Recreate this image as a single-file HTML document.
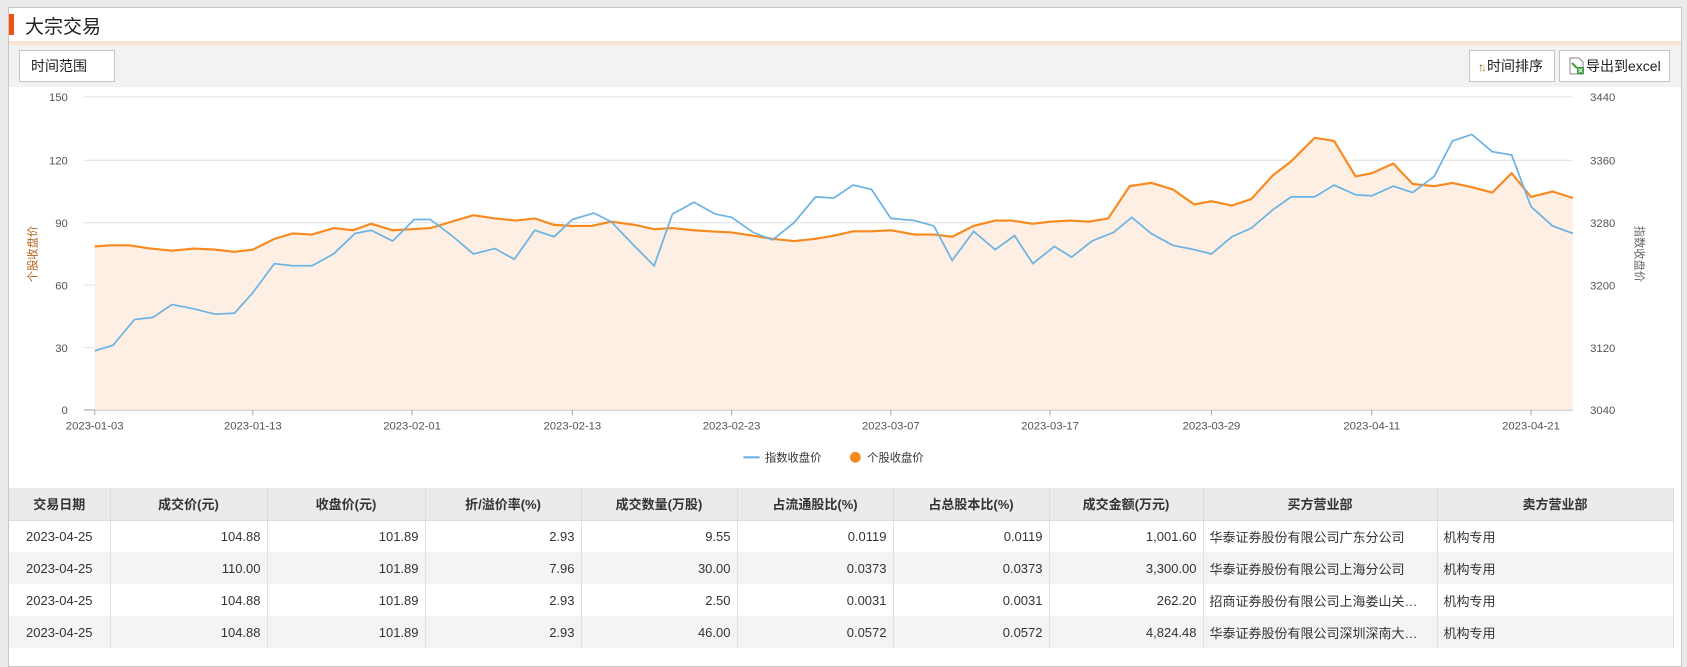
<!DOCTYPE html>
<html><head><meta charset="utf-8"><style>
*{margin:0;padding:0;box-sizing:border-box}
body{width:1687px;height:646px;overflow:hidden;background:#ebebeb;font-family:"Liberation Sans","Noto Sans CJK SC",sans-serif;color:#333;position:relative}
.panel{position:absolute;left:8px;top:7px;width:1674px;height:660px;background:#fff;border:1px solid #c8c8c8}
.obar{position:absolute;left:9px;top:14px;width:5px;height:21px;background:#f04e0e}
.title{position:absolute;left:25px;top:12px;font-size:19px;color:#222}
.peach{position:absolute;left:9px;top:41px;width:1672px;height:4px;background:#fde3d2}
.tool{position:absolute;left:9px;top:45px;width:1672px;height:42px;background:#f2f2f2}
.btn{position:absolute;top:50px;height:32px;border:1px solid #c4c4c4;background:#fff;font-size:14px;line-height:30px;color:#222}
table{position:absolute;left:9px;top:488px;border-collapse:collapse;font-size:13px;table-layout:fixed}
th{background:#ebebeb;height:32px;font-weight:bold;color:#333;border-right:1px solid #dcdcdc;border-bottom:1px solid #dcdcdc}
td{height:32px;border-right:1px solid #e0e0e0;padding:0 6px;white-space:nowrap;overflow:hidden}
tr.a td{background:#f4f4f4}
.r{text-align:right}.c{text-align:center}
</style></head><body>
<div class="panel"></div>
<div class="obar"></div>
<div class="title">大宗交易</div>
<div class="peach"></div>
<div class="tool"></div>
<div class="btn" style="left:19px;width:96px;padding-left:11px">时间范围</div>
<div class="btn" style="left:1469px;width:86px;padding-left:8px"><span style="font-size:12px;color:#555">↑</span><span style="font-size:12px;color:#f08000;margin-left:-3px">↓</span>时间排序</div>
<div class="btn" style="left:1559px;width:111px;padding-left:8px"><svg width="18" height="18" viewBox="0 0 18 18" style="vertical-align:-4px"><path d="M2 1h9l4 4v12H2z" fill="#fff" stroke="#888"/><path d="M4 6l5 5" stroke="#3a9a3a" stroke-width="2"/><rect x="9" y="10" width="7" height="7" fill="#3a9a3a"/><path d="M10.5 11.5l4 4M14.5 11.5l-4 4" stroke="#fff"/></svg>导出到excel</div>

<svg style="position:absolute;left:0;top:0" width="1687" height="646" viewBox="0 0 1568 600.4" preserveAspectRatio="none" font-family="Liberation Sans,sans-serif" font-size="10.5" fill="#555">
<g stroke="#e3e3e3" stroke-width="1">
<line x1="78" y1="90" x2="1462" y2="90"/><line x1="78" y1="149" x2="1462" y2="149"/><line x1="78" y1="207" x2="1462" y2="207"/><line x1="78" y1="265" x2="1462" y2="265"/><line x1="78" y1="323" x2="1462" y2="323"/>
</g>
<line x1="78" y1="381" x2="1462" y2="381" stroke="#aaa"/>
<g text-anchor="end"><text x="63" y="94">150</text><text x="63" y="153">120</text><text x="63" y="211">90</text><text x="63" y="269">60</text><text x="63" y="327">30</text><text x="63" y="385">0</text></g>
<g><text x="1478" y="94">3440</text><text x="1478" y="153">3360</text><text x="1478" y="211">3280</text><text x="1478" y="269">3200</text><text x="1478" y="327">3120</text><text x="1478" y="385">3040</text></g>
<text transform="translate(34,236) rotate(-90)" text-anchor="middle" fill="#b5651d" font-family="Liberation Sans,Noto Sans CJK SC,sans-serif">个股收盘价</text>
<text transform="translate(1520,236) rotate(90)" text-anchor="middle" fill="#666" font-family="Liberation Sans,Noto Sans CJK SC,sans-serif">指数收盘价</text>
<g text-anchor="middle"><text x="88" y="399">2023-01-03</text><text x="235" y="399">2023-01-13</text><text x="383" y="399">2023-02-01</text><text x="532" y="399">2023-02-13</text><text x="680" y="399">2023-02-23</text><text x="828" y="399">2023-03-07</text><text x="976" y="399">2023-03-17</text><text x="1126" y="399">2023-03-29</text><text x="1275" y="399">2023-04-11</text><text x="1423" y="399">2023-04-21</text></g>
<g stroke="#aaa"><line x1="88" y1="381" x2="88" y2="386"/><line x1="235" y1="381" x2="235" y2="386"/><line x1="383" y1="381" x2="383" y2="386"/><line x1="532" y1="381" x2="532" y2="386"/><line x1="680" y1="381" x2="680" y2="386"/><line x1="828" y1="381" x2="828" y2="386"/><line x1="976" y1="381" x2="976" y2="386"/><line x1="1126" y1="381" x2="1126" y2="386"/><line x1="1275" y1="381" x2="1275" y2="386"/><line x1="1423" y1="381" x2="1423" y2="386"/></g>
<polygon fill="#fdefe4" points="88,381 88,229 103,228 120,228 140,231 160,233 180,231 200,232 218,234 235,232 255,222 272,217 290,218 310,212 328,214 345,208 365,214 383,213 400,212 420,206 440,200 460,203 480,205 497,203 515,209 532,210 550,210 568,206 590,209 608,213 625,212 645,214 660,215 680,216 700,219 718,222 738,224 758,222 775,219 793,215 810,215 828,214 850,218 868,218 885,220 905,210 925,205 940,205 960,208 976,206 995,205 1012,206 1030,203 1050,173 1070,170 1090,176 1110,190 1126,187 1145,191 1163,185 1183,163 1200,150 1222,128 1240,131 1260,164 1275,161 1295,152 1313,171 1333,173 1350,170 1368,174 1387,179 1405,161 1423,183 1443,178 1462,184 1462,381"/>
<polyline fill="none" stroke="#f7891e" stroke-width="2" points="88,229 103,228 120,228 140,231 160,233 180,231 200,232 218,234 235,232 255,222 272,217 290,218 310,212 328,214 345,208 365,214 383,213 400,212 420,206 440,200 460,203 480,205 497,203 515,209 532,210 550,210 568,206 590,209 608,213 625,212 645,214 660,215 680,216 700,219 718,222 738,224 758,222 775,219 793,215 810,215 828,214 850,218 868,218 885,220 905,210 925,205 940,205 960,208 976,206 995,205 1012,206 1030,203 1050,173 1070,170 1090,176 1110,190 1126,187 1145,191 1163,185 1183,163 1200,150 1222,128 1240,131 1260,164 1275,161 1295,152 1313,171 1333,173 1350,170 1368,174 1387,179 1405,161 1423,183 1443,178 1462,184"/>
<polyline fill="none" stroke="#6cb3e3" stroke-width="1.6" points="88,326 105,321 125,297 142,295 160,283 180,287 200,292 218,291 235,272 255,245 272,247 290,247 310,236 330,217 345,214 365,224 385,204 400,204 420,219 440,236 460,231 478,241 497,214 515,220 532,204 552,198 568,206 590,229 608,247 625,199 645,188 665,199 680,202 700,216 718,223 738,207 758,183 775,184 793,172 810,176 828,203 850,205 868,210 885,242 905,215 925,232 943,219 960,245 980,229 996,239 1015,224 1035,216 1052,202 1070,217 1090,228 1110,232 1126,236 1145,220 1163,212 1183,195 1200,183 1222,183 1240,172 1260,181 1275,182 1295,173 1313,179 1333,164 1350,131 1368,125 1387,141 1405,144 1423,192 1443,210 1462,217"/>
<line x1="691" y1="425" x2="706" y2="425" stroke="#6cb3e3" stroke-width="2"/>
<text x="711" y="429" fill="#333" font-family="Liberation Sans,Noto Sans CJK SC,sans-serif">指数收盘价</text>
<circle cx="795" cy="425" r="5" fill="#f7891e"/>
<text x="806" y="429" fill="#333" font-family="Liberation Sans,Noto Sans CJK SC,sans-serif">个股收盘价</text>
</svg>

<table>
<colgroup><col style="width:101px"><col style="width:157px"><col style="width:158px"><col style="width:156px"><col style="width:156px"><col style="width:156px"><col style="width:156px"><col style="width:154px"><col style="width:234px"><col style="width:236px"></colgroup>
<tr><th>交易日期</th><th>成交价(元)</th><th>收盘价(元)</th><th>折/溢价率(%)</th><th>成交数量(万股)</th><th>占流通股比(%)</th><th>占总股本比(%)</th><th>成交金额(万元)</th><th>买方营业部</th><th>卖方营业部</th></tr>
<tr><td class="c">2023-04-25</td><td class="r">104.88</td><td class="r">101.89</td><td class="r">2.93</td><td class="r">9.55</td><td class="r">0.0119</td><td class="r">0.0119</td><td class="r">1,001.60</td><td>华泰证券股份有限公司广东分公司</td><td>机构专用</td></tr>
<tr class="a"><td class="c">2023-04-25</td><td class="r">110.00</td><td class="r">101.89</td><td class="r">7.96</td><td class="r">30.00</td><td class="r">0.0373</td><td class="r">0.0373</td><td class="r">3,300.00</td><td>华泰证券股份有限公司上海分公司</td><td>机构专用</td></tr>
<tr><td class="c">2023-04-25</td><td class="r">104.88</td><td class="r">101.89</td><td class="r">2.93</td><td class="r">2.50</td><td class="r">0.0031</td><td class="r">0.0031</td><td class="r">262.20</td><td>招商证券股份有限公司上海娄山关…</td><td>机构专用</td></tr>
<tr class="a"><td class="c">2023-04-25</td><td class="r">104.88</td><td class="r">101.89</td><td class="r">2.93</td><td class="r">46.00</td><td class="r">0.0572</td><td class="r">0.0572</td><td class="r">4,824.48</td><td>华泰证券股份有限公司深圳深南大…</td><td>机构专用</td></tr>
</table>
</body></html>
